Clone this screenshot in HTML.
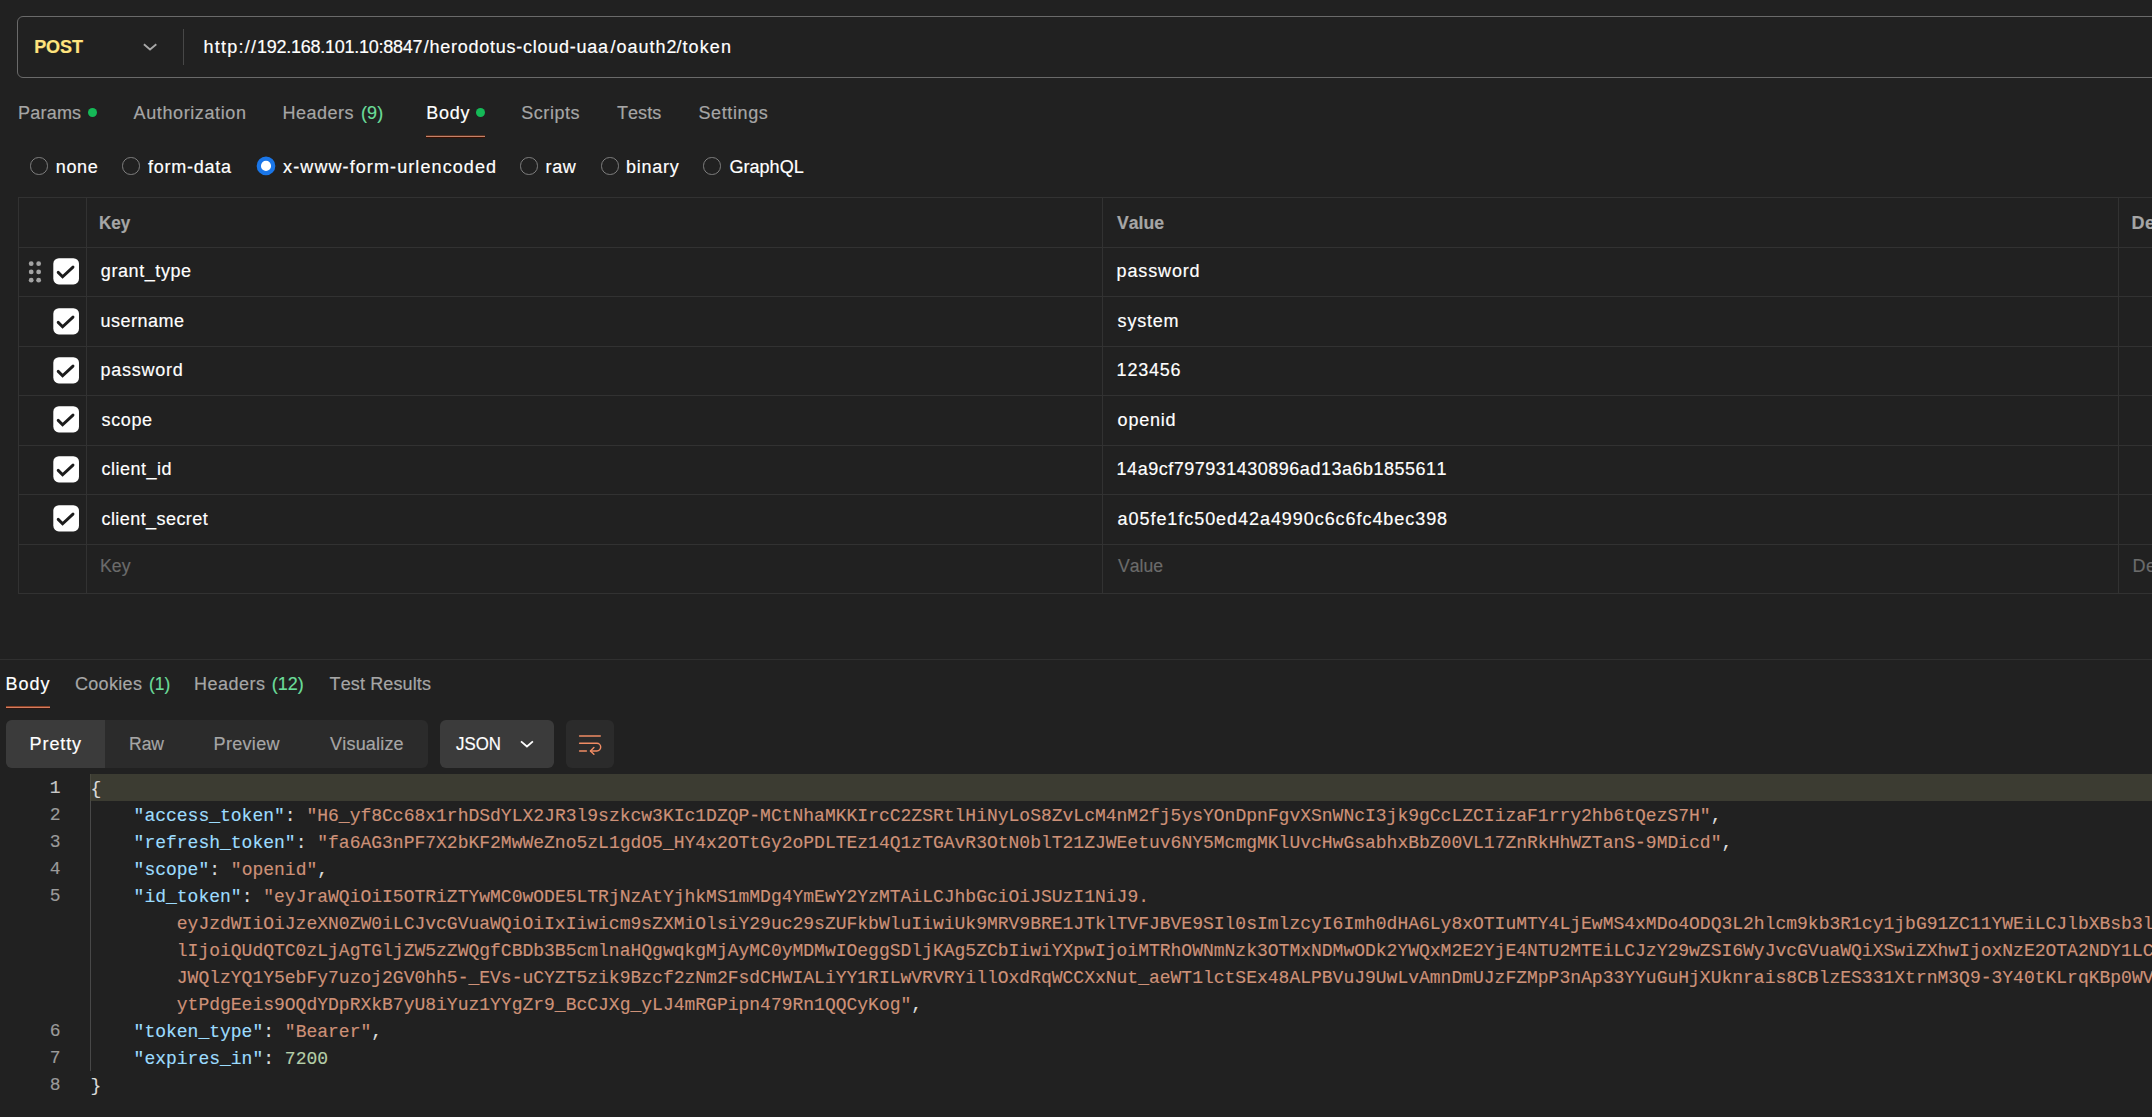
<!DOCTYPE html>
<html lang="en"><head><meta charset="utf-8"><title>Postman</title>
<style>
html,body{margin:0;padding:0;background:#212121;}
body{width:2152px;height:1117px;position:relative;overflow:hidden;font-family:"Liberation Sans",sans-serif;font-kerning:none;}
.t{position:absolute;white-space:pre;line-height:1;-webkit-text-stroke:0.18px currentColor;}
.r{position:absolute;}
.code{position:absolute;white-space:pre;font-family:"Liberation Mono",monospace;font-size:18px;line-height:27px;height:27px;-webkit-text-stroke:0.15px currentColor;}
.k{color:#9cdcfe}.s{color:#ce9178}.p{color:#dcdcdc}.n{color:#b5cea8}
svg{position:absolute;overflow:visible}
</style></head><body>
<div class="r" style="left:17px;top:16px;width:2200px;height:60px;border:1px solid #6a6a6a;border-radius:6px;box-sizing:content-box"></div>
<div class="r" style="left:183px;top:29.2px;width:1px;height:35.7px;background:#474747;"></div>
<span class="t" style="left:34.20px;top:37.96px;font-size:18px;color:#ffe47e;font-weight:700;letter-spacing:-0.104px;">POST</span>
<svg style="left:143px;top:42px" width="14" height="10" viewBox="0 0 14 10"><path d="M0.9 2.2 L7.03 7.5 L13.3 2.2" fill="none" stroke="#a8a8a8" stroke-width="1.8" stroke-linecap="butt" stroke-linejoin="miter"/></svg>
<span class="t" style="left:0;top:37.96px;font-size:18px;color:#ffffff;"><span style="position:absolute;left:203.60px;top:0;letter-spacing:1.229px">http://</span><span style="position:absolute;left:256.90px;top:0;letter-spacing:-0.247px">192.168.101.10:8847</span><span style="position:absolute;left:423.80px;top:0;letter-spacing:0.737px">/herodotus-cloud-uaa</span><span style="position:absolute;left:610.40px;top:0;letter-spacing:0.993px">/oauth2</span><span style="position:absolute;left:676.40px;top:0;letter-spacing:1.115px">/token</span></span>
<span class="t" style="left:18.10px;top:103.66px;font-size:18px;color:#a6a6a6;letter-spacing:0.197px;">Params</span>
<div class="r" style="left:87.7px;top:107.7px;width:9.7px;height:9.7px;background:#15b957;border-radius:50%"></div>
<span class="t" style="left:133.60px;top:103.66px;font-size:18px;color:#a6a6a6;letter-spacing:0.604px;">Authorization</span>
<span class="t" style="left:282.40px;top:103.66px;font-size:18px;color:#a6a6a6;letter-spacing:0.494px;">Headers</span>
<span class="t" style="left:360.90px;top:103.66px;font-size:18px;color:#6bdd9a;letter-spacing:0.198px;">(9)</span>
<span class="t" style="left:426.30px;top:103.66px;font-size:18px;color:#ffffff;letter-spacing:0.691px;">Body</span>
<div class="r" style="left:475.7px;top:107.7px;width:9.7px;height:9.7px;background:#15b957;border-radius:50%"></div>
<div class="r" style="left:425.8px;top:135px;width:59.3px;height:1px;background:#55301f;"></div>
<div class="r" style="left:425.8px;top:136px;width:59.3px;height:1px;background:#c6826a;"></div>
<div class="r" style="left:425.8px;top:137px;width:59.3px;height:1px;background:#3c1203;"></div>
<span class="t" style="left:521.20px;top:103.66px;font-size:18px;color:#a6a6a6;letter-spacing:0.565px;">Scripts</span>
<span class="t" style="left:617.00px;top:103.66px;font-size:18px;color:#a6a6a6;letter-spacing:0.048px;">Tests</span>
<span class="t" style="left:698.40px;top:103.66px;font-size:18px;color:#a6a6a6;letter-spacing:0.623px;">Settings</span>
<div class="r" style="left:30px;top:157px;width:15.5px;height:15.5px;border:1.5px solid #7e7e7e;border-radius:50%"></div>
<span class="t" style="left:55.70px;top:157.66px;font-size:18px;color:#ffffff;letter-spacing:0.689px;">none</span>
<div class="r" style="left:122px;top:157px;width:15.5px;height:15.5px;border:1.5px solid #7e7e7e;border-radius:50%"></div>
<span class="t" style="left:148.10px;top:157.66px;font-size:18px;color:#ffffff;letter-spacing:0.748px;">form-data</span>
<svg style="left:255.5px;top:155px" width="22" height="22" viewBox="0 0 22 22"><circle cx="10.0" cy="10.9" r="7.2" fill="#ffffff" stroke="#1a76e8" stroke-width="4.3"/></svg>
<span class="t" style="left:283.10px;top:157.66px;font-size:18px;color:#ffffff;letter-spacing:1.098px;">x-www-form-urlencoded</span>
<div class="r" style="left:520px;top:157px;width:15.5px;height:15.5px;border:1.5px solid #7e7e7e;border-radius:50%"></div>
<span class="t" style="left:545.60px;top:157.66px;font-size:18px;color:#ffffff;letter-spacing:0.548px;">raw</span>
<div class="r" style="left:601px;top:157px;width:15.5px;height:15.5px;border:1.5px solid #7e7e7e;border-radius:50%"></div>
<span class="t" style="left:626.00px;top:157.66px;font-size:18px;color:#ffffff;letter-spacing:0.755px;">binary</span>
<div class="r" style="left:703px;top:157px;width:15.5px;height:15.5px;border:1.5px solid #7e7e7e;border-radius:50%"></div>
<span class="t" style="left:729.40px;top:157.66px;font-size:18px;color:#ffffff;letter-spacing:0.045px;">GraphQL</span>
<div class="r" style="left:18px;top:197px;width:2140px;height:1px;background:#323232;"></div>
<div class="r" style="left:18px;top:247px;width:2140px;height:1px;background:#323232;"></div>
<div class="r" style="left:18px;top:296px;width:2140px;height:1px;background:#323232;"></div>
<div class="r" style="left:18px;top:346px;width:2140px;height:1px;background:#323232;"></div>
<div class="r" style="left:18px;top:395px;width:2140px;height:1px;background:#323232;"></div>
<div class="r" style="left:18px;top:445px;width:2140px;height:1px;background:#323232;"></div>
<div class="r" style="left:18px;top:494px;width:2140px;height:1px;background:#323232;"></div>
<div class="r" style="left:18px;top:544px;width:2140px;height:1px;background:#323232;"></div>
<div class="r" style="left:18px;top:593px;width:2140px;height:1px;background:#323232;"></div>
<div class="r" style="left:18px;top:197px;width:1px;height:397px;background:#323232;"></div>
<div class="r" style="left:86px;top:197px;width:1px;height:397px;background:#323232;"></div>
<div class="r" style="left:1102px;top:197px;width:1px;height:397px;background:#323232;"></div>
<div class="r" style="left:2118px;top:197px;width:1px;height:397px;background:#323232;"></div>
<span class="t" style="left:99.15px;top:213.96px;font-size:18px;color:#a6a6a6;font-weight:700;transform:scaleX(0.9497);transform-origin:0 0;">Key</span>
<span class="t" style="left:1116.60px;top:213.96px;font-size:18px;color:#a6a6a6;font-weight:700;transform:scaleX(0.9789);transform-origin:0 0;">Value</span>
<span class="t" style="left:2131.60px;top:213.96px;font-size:18px;color:#a6a6a6;font-weight:700;letter-spacing:0.400px;">De</span>
<span class="t" style="left:100.80px;top:262.36px;font-size:18px;color:#ffffff;letter-spacing:0.583px;">grant_type</span>
<span class="t" style="left:1116.60px;top:262.36px;font-size:18px;color:#ffffff;letter-spacing:0.854px;">password</span>
<svg style="left:53.3px;top:258.10px" width="26.2" height="26.6" viewBox="0 0 26.2 26.6"><rect x="0.3" y="0.2" width="25.7" height="26.2" rx="5.6" fill="#fff"/><path d="M5.2 14.4 L9.6 18.8 L20.0 9.1" fill="none" stroke="#1c1c1c" stroke-width="2.9" stroke-linecap="round" stroke-linejoin="miter"/></svg>
<span class="t" style="left:100.50px;top:311.80px;font-size:18px;color:#ffffff;letter-spacing:0.496px;">username</span>
<span class="t" style="left:1117.60px;top:311.80px;font-size:18px;color:#ffffff;letter-spacing:0.798px;">system</span>
<svg style="left:53.3px;top:307.54px" width="26.2" height="26.6" viewBox="0 0 26.2 26.6"><rect x="0.3" y="0.2" width="25.7" height="26.2" rx="5.6" fill="#fff"/><path d="M5.2 14.4 L9.6 18.8 L20.0 9.1" fill="none" stroke="#1c1c1c" stroke-width="2.9" stroke-linecap="round" stroke-linejoin="miter"/></svg>
<span class="t" style="left:100.50px;top:361.24px;font-size:18px;color:#ffffff;letter-spacing:0.739px;">password</span>
<span class="t" style="left:1116.60px;top:361.24px;font-size:18px;color:#ffffff;letter-spacing:0.789px;">123456</span>
<svg style="left:53.3px;top:356.98px" width="26.2" height="26.6" viewBox="0 0 26.2 26.6"><rect x="0.3" y="0.2" width="25.7" height="26.2" rx="5.6" fill="#fff"/><path d="M5.2 14.4 L9.6 18.8 L20.0 9.1" fill="none" stroke="#1c1c1c" stroke-width="2.9" stroke-linecap="round" stroke-linejoin="miter"/></svg>
<span class="t" style="left:101.50px;top:410.68px;font-size:18px;color:#ffffff;letter-spacing:0.645px;">scope</span>
<span class="t" style="left:1117.60px;top:410.68px;font-size:18px;color:#ffffff;letter-spacing:0.792px;">openid</span>
<svg style="left:53.3px;top:406.42px" width="26.2" height="26.6" viewBox="0 0 26.2 26.6"><rect x="0.3" y="0.2" width="25.7" height="26.2" rx="5.6" fill="#fff"/><path d="M5.2 14.4 L9.6 18.8 L20.0 9.1" fill="none" stroke="#1c1c1c" stroke-width="2.9" stroke-linecap="round" stroke-linejoin="miter"/></svg>
<span class="t" style="left:101.50px;top:460.12px;font-size:18px;color:#ffffff;letter-spacing:0.509px;">client_id</span>
<span class="t" style="left:1116.60px;top:460.12px;font-size:18px;color:#ffffff;letter-spacing:0.506px;">14a9cf797931430896ad13a6b1855611</span>
<svg style="left:53.3px;top:455.86px" width="26.2" height="26.6" viewBox="0 0 26.2 26.6"><rect x="0.3" y="0.2" width="25.7" height="26.2" rx="5.6" fill="#fff"/><path d="M5.2 14.4 L9.6 18.8 L20.0 9.1" fill="none" stroke="#1c1c1c" stroke-width="2.9" stroke-linecap="round" stroke-linejoin="miter"/></svg>
<span class="t" style="left:101.50px;top:509.56px;font-size:18px;color:#ffffff;letter-spacing:0.429px;">client_secret</span>
<span class="t" style="left:1117.60px;top:509.56px;font-size:18px;color:#ffffff;letter-spacing:0.944px;">a05fe1fc50ed42a4990c6c6fc4bec398</span>
<svg style="left:53.3px;top:505.30px" width="26.2" height="26.6" viewBox="0 0 26.2 26.6"><rect x="0.3" y="0.2" width="25.7" height="26.2" rx="5.6" fill="#fff"/><path d="M5.2 14.4 L9.6 18.8 L20.0 9.1" fill="none" stroke="#1c1c1c" stroke-width="2.9" stroke-linecap="round" stroke-linejoin="miter"/></svg>
<svg style="left:26px;top:258px" width="20" height="28" viewBox="0 0 20 28"><g fill="#a3a3a3"><circle cx="5.20" cy="5.70" r="2.4"/><circle cx="5.20" cy="13.95" r="2.4"/><circle cx="5.20" cy="22.20" r="2.4"/><circle cx="12.65" cy="5.70" r="2.4"/><circle cx="12.65" cy="13.95" r="2.4"/><circle cx="12.65" cy="22.20" r="2.4"/></g></svg>
<span class="t" style="left:100.42px;top:556.76px;font-size:18px;color:#6b6b6b;transform:scaleX(0.9828);transform-origin:0 0;">Key</span>
<span class="t" style="left:1117.60px;top:556.76px;font-size:18px;color:#6b6b6b;transform:scaleX(0.9777);transform-origin:0 0;">Value</span>
<span class="t" style="left:2132.60px;top:556.76px;font-size:18px;color:#6b6b6b;letter-spacing:0.400px;">De</span>
<div class="r" style="left:0px;top:658.7px;width:2152px;height:1.5px;background:#303030;"></div>
<span class="t" style="left:5.60px;top:674.56px;font-size:18px;color:#ffffff;letter-spacing:0.991px;">Body</span>
<div class="r" style="left:5.8px;top:706px;width:44.3px;height:1px;background:#8f4326;"></div>
<div class="r" style="left:5.8px;top:707px;width:44.3px;height:1px;background:#d47d61;"></div>
<div class="r" style="left:5.8px;top:708px;width:44.3px;height:1px;background:#2b1712;"></div>
<span class="t" style="left:74.90px;top:674.56px;font-size:18px;color:#a6a6a6;letter-spacing:0.328px;">Cookies</span>
<span class="t" style="left:148.84px;top:674.56px;font-size:18px;color:#6bdd9a;transform:scaleX(0.9648);transform-origin:0 0;">(1)</span>
<span class="t" style="left:194.00px;top:674.56px;font-size:18px;color:#a6a6a6;letter-spacing:0.494px;">Headers</span>
<span class="t" style="left:271.70px;top:674.56px;font-size:18px;color:#6bdd9a;letter-spacing:0.028px;">(12)</span>
<span class="t" style="left:329.50px;top:674.56px;font-size:18px;color:#a6a6a6;letter-spacing:0.134px;">Test Results</span>
<div class="r" style="left:6px;top:720px;width:421.6px;height:47.7px;background:#2b2b2b;border-radius:6px"></div>
<div class="r" style="left:6px;top:720px;width:99px;height:47.7px;background:#3b3b3b;border-radius:6px 0 0 6px"></div>
<span class="t" style="left:29.60px;top:734.56px;font-size:18px;color:#ffffff;letter-spacing:0.897px;">Pretty</span>
<span class="t" style="left:129.43px;top:734.56px;font-size:18px;color:#a6a6a6;transform:scaleX(0.9720);transform-origin:0 0;">Raw</span>
<span class="t" style="left:213.60px;top:734.56px;font-size:18px;color:#a6a6a6;letter-spacing:0.313px;">Preview</span>
<span class="t" style="left:330.10px;top:734.56px;font-size:18px;color:#a6a6a6;letter-spacing:0.184px;">Visualize</span>
<div class="r" style="left:440px;top:720px;width:113.7px;height:47.7px;background:#3b3b3b;border-radius:6px"></div>
<span class="t" style="left:455.60px;top:734.56px;font-size:18px;color:#ffffff;transform:scaleX(0.9360);transform-origin:0 0;">JSON</span>
<svg style="left:520px;top:739px" width="14" height="10" viewBox="0 0 14 10"><path d="M1.0 2.4 L6.95 7.55 L12.9 2.4" fill="none" stroke="#ffffff" stroke-width="1.8" stroke-linecap="butt" stroke-linejoin="miter"/></svg>
<div class="r" style="left:566px;top:720px;width:47.6px;height:47.7px;background:#2b2b2b;border-radius:6px"></div>
<svg style="left:578px;top:732px" width="24" height="24" viewBox="0 0 24 24"><g fill="none" stroke="#f08c64" stroke-width="1.45" stroke-linecap="round" stroke-linejoin="round"><path d="M1.6 4 H22.3"/><path d="M1.6 11.3 H18.9 a3.8 3.8 0 0 1 0 7.6 H12.6"/><path d="M15.9 15.5 L12.4 18.9 L15.9 22.3"/><path d="M1.6 18.9 H8.4"/></g></svg>
<div class="r" style="left:90px;top:774.1px;width:2100px;height:26.8px;background:#3c3c32;"></div>
<div class="r" style="left:90px;top:800.9px;width:1.1px;height:270.2px;background:#484848;"></div>
<div class="r" style="left:90px;top:774.1px;width:1.1px;height:26.8px;background:#48483e;"></div>
<span class="code" style="left:0;width:60.6px;text-align:right;top:775.3px;color:#c8c8c8">1</span>
<span class="code" style="left:90.40px;top:776.3px"><span class="p">{</span></span>
<span class="code" style="left:0;width:60.6px;text-align:right;top:802.3px;color:#9b9b9b">2</span>
<span class="code" style="left:133.60px;top:803.3px"><span class="k">"access_token"</span><span class="p">: </span><span class="s">"H6_yf8Cc68x1rhDSdYLX2JR3l9szkcw3KIc1DZQP-MCtNhaMKKIrcC2ZSRtlHiNyLoS8ZvLcM4nM2fj5ysYOnDpnFgvXSnWNcI3jk9gCcLZCIizaF1rry2hb6tQezS7H"</span><span class="p">,</span></span>
<span class="code" style="left:0;width:60.6px;text-align:right;top:829.3px;color:#9b9b9b">3</span>
<span class="code" style="left:133.60px;top:830.3px"><span class="k">"refresh_token"</span><span class="p">: </span><span class="s">"fa6AG3nPF7X2bKF2MwWeZno5zL1gdO5_HY4x2OTtGy2oPDLTEz14Q1zTGAvR3OtN0blT21ZJWEetuv6NY5McmgMKlUvcHwGsabhxBbZ00VL17ZnRkHhWZTanS-9MDicd"</span><span class="p">,</span></span>
<span class="code" style="left:0;width:60.6px;text-align:right;top:856.3px;color:#9b9b9b">4</span>
<span class="code" style="left:133.60px;top:857.3px"><span class="k">"scope"</span><span class="p">: </span><span class="s">"openid"</span><span class="p">,</span></span>
<span class="code" style="left:0;width:60.6px;text-align:right;top:883.3px;color:#9b9b9b">5</span>
<span class="code" style="left:133.60px;top:884.3px"><span class="k">"id_token"</span><span class="p">: </span><span class="s">"eyJraWQiOiI5OTRiZTYwMC0wODE5LTRjNzAtYjhkMS1mMDg4YmEwY2YzMTAiLCJhbGciOiJSUzI1NiJ9.</span></span>
<span class="code" style="left:176.80px;top:911.3px"><span class="s">eyJzdWIiOiJzeXN0ZW0iLCJvcGVuaWQiOiIxIiwicm9sZXMiOlsiY29uc29sZUFkbWluIiwiUk9MRV9BRE1JTklTVFJBVE9SIl0sImlzcyI6Imh0dHA6Ly8xOTIuMTY4LjEwMS4xMDo4ODQ3L2hlcm9kb3R1cy1jbG91ZC11YWEiLCJlbXBsb3l</span></span>
<span class="code" style="left:176.80px;top:938.3px"><span class="s">lIjoiQUdQTC0zLjAgTGljZW5zZWQgfCBDb3B5cmlnaHQgwqkgMjAyMC0yMDMwIOeggSDljKAg5ZCbIiwiYXpwIjoiMTRhOWNmNzk3OTMxNDMwODk2YWQxM2E2YjE4NTU2MTEiLCJzY29wZSI6WyJvcGVuaWQiXSwiZXhwIjoxNzE2OTA2NDY1LC</span></span>
<span class="code" style="left:176.80px;top:965.3px"><span class="s">JWQlzYQ1Y5ebFy7uzoj2GV0hh5-_EVs-uCYZT5zik9Bzcf2zNm2FsdCHWIALiYY1RILwVRVRYillOxdRqWCCXxNut_aeWT1lctSEx48ALPBVuJ9UwLvAmnDmUJzFZMpP3nAp33YYuGuHjXUknrais8CBlzES331XtrnM3Q9-3Y40tKLrqKBp0WV</span></span>
<span class="code" style="left:176.80px;top:992.3px"><span class="s">ytPdgEeis9OQdYDpRXkB7yU8iYuz1YYgZr9_BcCJXg_yLJ4mRGPipn479Rn1QQCyKog"</span><span class="p">,</span></span>
<span class="code" style="left:0;width:60.6px;text-align:right;top:1018.3px;color:#9b9b9b">6</span>
<span class="code" style="left:133.60px;top:1019.3px"><span class="k">"token_type"</span><span class="p">: </span><span class="s">"Bearer"</span><span class="p">,</span></span>
<span class="code" style="left:0;width:60.6px;text-align:right;top:1045.3px;color:#9b9b9b">7</span>
<span class="code" style="left:133.60px;top:1046.3px"><span class="k">"expires_in"</span><span class="p">: </span><span class="n">7200</span></span>
<span class="code" style="left:0;width:60.6px;text-align:right;top:1072.3px;color:#9b9b9b">8</span>
<span class="code" style="left:90.40px;top:1073.3px"><span class="p">}</span></span>
</body></html>
